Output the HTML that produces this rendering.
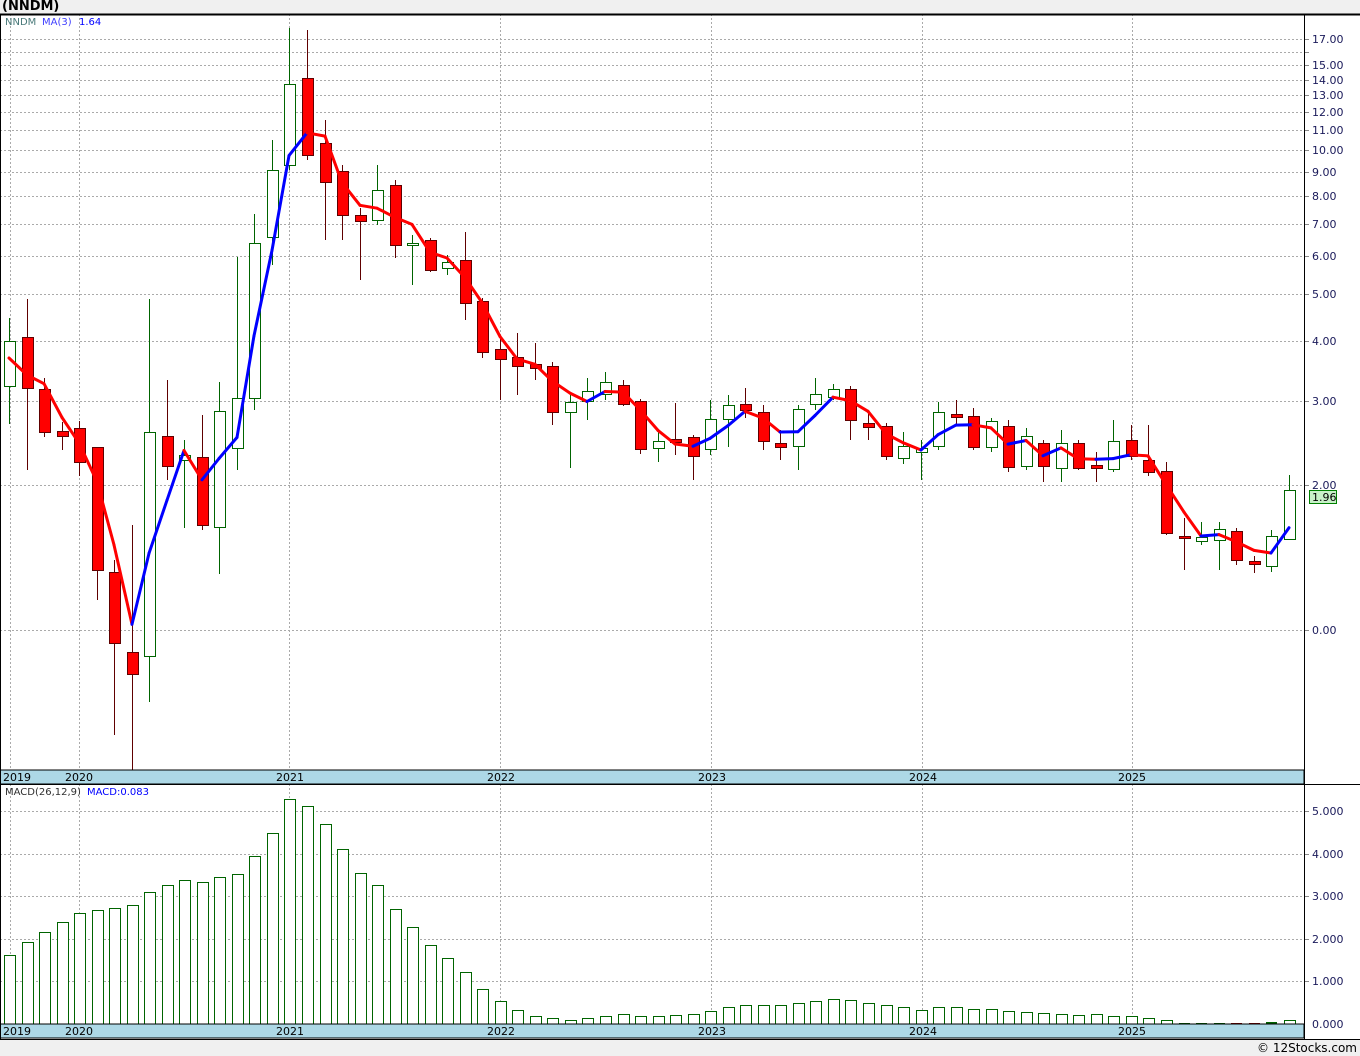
<!DOCTYPE html>
<html><head><meta charset="utf-8"><style>
html,body{margin:0;padding:0;background:#f0f0f0;width:1360px;height:1056px;overflow:hidden;font-family:"DejaVu Sans","Liberation Sans",sans-serif}
#t{position:absolute;left:2px;top:-1px;font:bold 13px "DejaVu Sans",sans-serif;color:#000}
svg{position:absolute;left:0;top:0}
</style></head><body>
<div id="t">(NNDM)</div>
<svg id="s" width="1360" height="1056" xmlns="http://www.w3.org/2000/svg" font-family="DejaVu Sans, Liberation Sans, sans-serif" font-size="11">
<rect x="0" y="14" width="1360" height="1026" fill="#fff"/>
<g id="g"></g>
<rect x="0" y="770" width="1304" height="14" fill="#add8e6" stroke="#000"/>
<rect x="0" y="1024" width="1304" height="14" fill="#add8e6" stroke="#000"/>
<line x1="0" y1="14.5" x2="1360" y2="14.5" stroke="#000" stroke-width="2"/>
<line x1="1304.5" y1="14" x2="1304.5" y2="1040" stroke="#000"/>
<line x1="0" y1="784.5" x2="1360" y2="784.5" stroke="#000"/>
<line x1="0.5" y1="14" x2="0.5" y2="1040" stroke="#000"/>
<line x1="0" y1="1039.5" x2="1360" y2="1039.5" stroke="#000"/>
<g fill="#000">
<text x="3" y="781">2019</text><text x="65" y="781">2020</text><text x="276" y="781">2021</text><text x="487" y="781">2022</text><text x="698" y="781">2023</text><text x="909" y="781">2024</text><text x="1118" y="781">2025</text>
<text x="3" y="1035">2019</text><text x="65" y="1035">2020</text><text x="276" y="1035">2021</text><text x="487" y="1035">2022</text><text x="698" y="1035">2023</text><text x="909" y="1035">2024</text><text x="1118" y="1035">2025</text>
</g>
<g fill="#1a1a5a">
<text x="1312" y="43">17.00</text><text x="1312" y="69">15.00</text><text x="1312" y="84">14.00</text><text x="1312" y="99">13.00</text><text x="1312" y="116">12.00</text><text x="1312" y="134">11.00</text><text x="1312" y="154">10.00</text><text x="1312" y="176">9.00</text><text x="1312" y="200">8.00</text><text x="1312" y="228">7.00</text><text x="1312" y="260">6.00</text><text x="1312" y="298">5.00</text><text x="1312" y="345">4.00</text><text x="1312" y="405">3.00</text><text x="1312" y="489">2.00</text><text x="1312" y="634">0.00</text>
<text x="1312" y="815">5.000</text><text x="1312" y="858">4.000</text><text x="1312" y="900">3.000</text><text x="1312" y="943">2.000</text><text x="1312" y="985">1.000</text><text x="1312" y="1028">0.000</text>
</g>
<rect x="1309.5" y="490.5" width="27" height="13" fill="#c8f0c8" stroke="#008000"/>
<text x="1312" y="501" fill="#000">1.96</text>
<text x="5" y="25" font-size="10" fill="#4a7a7a">NNDM</text><text x="42" y="25" font-size="10" fill="#4040ff">MA(3)</text><text x="79" y="25" font-size="10" fill="#0000ff">1.64</text>
<text x="5" y="795" font-size="10" fill="#303030">MACD(26,12,9)</text><text x="87" y="795" font-size="10" fill="#0000ff">MACD:0.083</text>
<text x="1357" y="1052" text-anchor="end" font-size="12" fill="#000">© 12Stocks.com</text>
</svg>
<script>
var g=document.getElementById('g'),h='';
var py=[39,52,65,80,95,112,130,150,172,196,224,256,294,341,401,485,630];
py.forEach(function(y){h+='<line x1="0" y1="'+y+'.5" x2="1304" y2="'+y+'.5" stroke="#aaa" stroke-dasharray="2,2"/><line x1="1304" y1="'+y+'.5" x2="1309" y2="'+y+'.5" stroke="#888"/>';});
[811,854,896,939,981].forEach(function(y){h+='<line x1="0" y1="'+y+'.5" x2="1304" y2="'+y+'.5" stroke="#aaa" stroke-dasharray="2,2"/><line x1="1304" y1="'+y+'.5" x2="1309" y2="'+y+'.5" stroke="#888"/>';});
[10,79,289,500,711,922,1132].forEach(function(x){h+='<line x1="'+x+'.5" y1="14" x2="'+x+'.5" y2="770" stroke="#aaa" stroke-dasharray="2,2"/><line x1="'+x+'.5" y1="784" x2="'+x+'.5" y2="1024" stroke="#aaa" stroke-dasharray="2,2"/>';});
// [color, bodyTop, bodyBot, wickTop, wickBot]
var c=[['g',341,386,318,424],['r',337,388,299,470],['r',389,432,378,437],['r',431,436,422,450],['r',428,462,421,476],['r',447,570,447,600],['r',572,643,560,735],['r',652,674,525,770],['g',432,656,299,702],['r',436,466,380,480],['g',455,460,440,528],['r',457,525,415,530],['g',411,527,382,574],['g',398,448,257,470],['g',243,398,214,410],['g',170,237,140,265],['g',84,165,28,170],['r',78,155,30,160],['r',143,182,120,240],['r',171,215,165,240],['r',215,221,208,280],['g',190,220,165,225],['r',185,245,180,258],['g',243,245,235,285],['r',240,270,238,272],['g',262,268,255,275],['r',260,303,232,320],['r',301,352,298,358],['r',349,359,335,400],['r',357,366,333,395],['r',364,368,343,380],['r',366,412,362,425],['g',402,412,395,468],['g',391,401,378,420],['g',382,394,372,400],['r',385,404,380,406],['r',401,449,399,454],['g',441,448,430,462],['r',439,442,403,455],['r',437,456,435,480],['g',419,449,400,455],['g',405,419,395,447],['r',404,410,388,418],['r',412,441,405,450],['r',443,447,430,460],['g',409,446,405,470],['g',394,404,378,410],['g',389,397,384,400],['r',389,420,386,440],['r',423,427,413,440],['r',426,456,423,460],['g',446,458,432,464],['g',448,452,440,480],['g',412,446,402,450],['r',414,417,400,425],['r',416,447,408,450],['g',421,447,418,452],['r',426,467,420,472],['g',436,466,428,470],['r',443,466,440,482],['g',443,468,430,482],['r',443,468,440,470],['r',465,468,452,482],['g',441,469,420,472],['r',440,456,425,460],['r',460,472,425,476],['r',471,533,462,535],['r',536,538,518,570],['g',537,541,522,545],['g',529,540,522,570],['r',531,560,528,565],['r',561,564,556,573],['g',536,566,530,572],['g',490,539,475,540]];
var X=function(i){return Math.round(9+i*17.53);};
var cl=[];
c.forEach(function(d,i){var x=X(i);var col=d[0]=='g'?'#006400':'#600000';
h+='<line x1="'+x+'.5" y1="'+d[3]+'" x2="'+x+'.5" y2="'+d[4]+'" stroke="'+col+'"/>';
h+='<rect x="'+(x-5)+'.5" y="'+d[1]+'.5" width="11" height="'+Math.max(1,d[2]-d[1])+'" fill="'+(d[0]=='g'?'#fff':'#f00')+'" stroke="'+col+'"/>';
cl.push(d[0]=='g'?d[1]:d[2]);});
function pr(y){return Math.pow(10,(630-y)/480);}function yy(p){return 630-480*Math.log(p)/Math.LN10;}
var ma=[];for(var i=0;i<c.length;i++){var s=0,n=0;for(var k=Math.max(0,i-2);k<=i;k++){s+=pr(cl[k]);n++;}ma.push(yy(s/n));}
ma[0]=358;ma[1]=375;
for(var i=1;i<ma.length;i++){var col=ma[i]<ma[i-1]?'#0000ff':'#ff0000';h+='<line x1="'+X(i-1)+'" y1="'+ma[i-1].toFixed(1)+'" x2="'+X(i)+'" y2="'+ma[i].toFixed(1)+'" stroke="'+col+'" stroke-width="3" stroke-linecap="round"/>';}
var m=[955,942,932,922,913,910,908,905,892,885,880,882,877,874,856,833,799,806,824,849,873,885,909,927,945,958,972,989,1001,1010,1016,1018,1020,1018,1016,1014,1016,1016,1015,1014,1011,1007,1005,1005,1005,1003,1001,999,1000,1003,1005,1007,1010,1007,1007,1009,1009,1011,1012,1013,1014,1015,1014,1016,1016,1018,1020,1023,1023,1023,1023,1023,1022,1020];
m.forEach(function(t,i){var x=X(i);if(i>=67&&i<=72){var col=(i==70||i==71)?'#800000':'#006400';h+='<rect x="'+(x-5)+'" y="'+t+'" width="11" height="2" fill="'+col+'"/>';}else h+='<rect x="'+(x-5)+'.5" y="'+t+'.5" width="11" height="'+(1024-t)+'" fill="#fff" stroke="#006400"/>';});
g.innerHTML=h;
</script>
</body></html>
